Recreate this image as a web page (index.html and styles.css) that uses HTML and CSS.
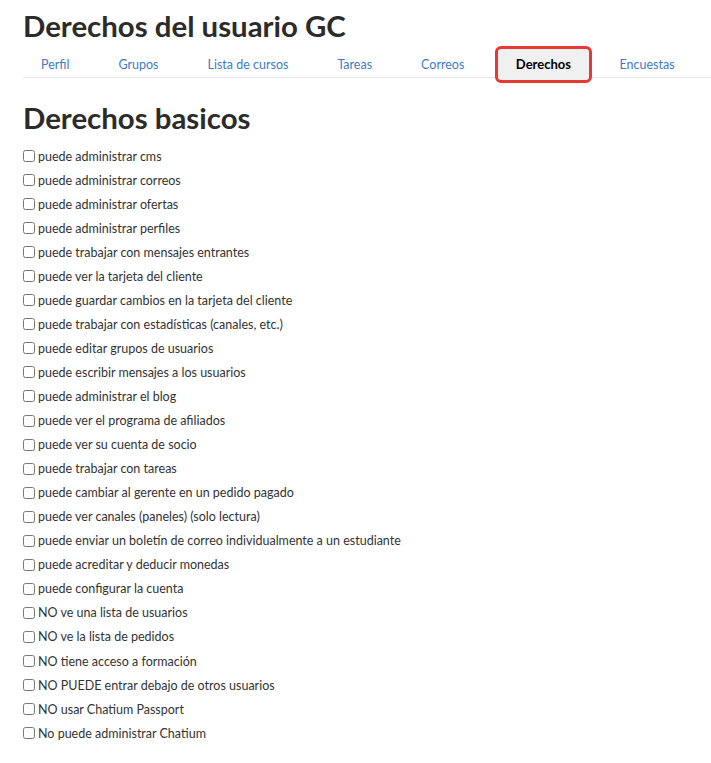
FILE: index.html
```html
<!DOCTYPE html>
<html lang="es">
<head>
    <meta charset="UTF-8">
    <meta name="viewport" content="width=device-width, initial-scale=1.0">
    <title>Derechos del usuario GC</title>
    <link rel="stylesheet" href="styles.css">
</head>
<body>
    <div class="page">
        <h1 class="page-title">Derechos del usuario GC</h1>

        <ul class="tabs">
            <li><a href="#">Perfil</a></li>
            <li><a href="#">Grupos</a></li>
            <li><a href="#">Lista de cursos</a></li>
            <li><a href="#">Tareas</a></li>
            <li><a href="#">Correos</a></li>
            <li class="active"><a href="#">Derechos</a></li>
            <li><a href="#">Encuestas</a></li>
        </ul>

        <h2 class="section-title">Derechos basicos</h2>

        <form class="rights">
            <label><input type="checkbox"> puede administrar cms</label>
            <label><input type="checkbox"> puede administrar correos</label>
            <label><input type="checkbox"> puede administrar ofertas</label>
            <label><input type="checkbox"> puede administrar perfiles</label>
            <label><input type="checkbox"> puede trabajar con mensajes entrantes</label>
            <label><input type="checkbox"> puede ver la tarjeta del cliente</label>
            <label><input type="checkbox"> puede guardar cambios en la tarjeta del cliente</label>
            <label><input type="checkbox"> puede trabajar con estadísticas (canales, etc.)</label>
            <label><input type="checkbox"> puede editar grupos de usuarios</label>
            <label><input type="checkbox"> puede escribir mensajes a los usuarios</label>
            <label><input type="checkbox"> puede administrar el blog</label>
            <label><input type="checkbox"> puede ver el programa de afiliados</label>
            <label><input type="checkbox"> puede ver su cuenta de socio</label>
            <label><input type="checkbox"> puede trabajar con tareas</label>
            <label><input type="checkbox"> puede cambiar al gerente en un pedido pagado</label>
            <label><input type="checkbox"> puede ver canales (paneles) (solo lectura)</label>
            <label><input type="checkbox"> puede enviar un boletín de correo individualmente a un estudiante</label>
            <label><input type="checkbox"> puede acreditar y deducir monedas</label>
            <label><input type="checkbox"> puede configurar la cuenta</label>
            <label><input type="checkbox"> NO ve una lista de usuarios</label>
            <label><input type="checkbox"> NO ve la lista de pedidos</label>
            <label><input type="checkbox"> NO tiene acceso a formación</label>
            <label><input type="checkbox"> NO PUEDE entrar debajo de otros usuarios</label>
            <label><input type="checkbox"> NO usar Chatium Passport</label>
            <label><input type="checkbox"> No puede administrar Chatium</label>
        </form>
    </div>
</body>
</html>
```

FILE: styles.css
```css
* {
    margin: 0;
    padding: 0;
    box-sizing: border-box;
}

body {
    font-family: Lato, "Open Sans", Arial, sans-serif;
    color: #333;
    background: #fff;
}

.page {
    padding: 8px 0 0 23px;
}

.page-title {
    font-size: 29.4px;
    font-weight: bold;
    line-height: 36px;
    color: #2b2b2b;
}

/* tabs */
.tabs {
    list-style: none;
    display: flex;
    align-items: flex-end;
    height: 34px;
    padding-bottom: 3px;
    border-bottom: 1px solid #e6e6e6;
}

.tabs li {
    display: flex;
}

.tabs a {
    display: block;
    padding: 0 24.5px;
    font-size: 12.5px;
    line-height: 18px;
    color: #3f7bc0;
    text-decoration: none;
}

.tabs li:first-child a {
    padding-left: 18px;
}

.tabs li.active a {
    margin: 0 3px 0 6px;
    padding: 6px 18px;
    height: 37px;
    background: #f0f0f0;
    border: 3px solid #e53a33;
    border-radius: 6px;
    color: #000;
    font-size: 13px;
    font-weight: bold;
    position: relative;
    top: 9px;
}

/* rights list */
.section-title {
    font-size: 29.4px;
    font-weight: bold;
    line-height: 36px;
    color: #2b2b2b;
    margin-top: 22px;
    margin-bottom: 8px;
}

.rights label {
    display: flex;
    align-items: center;
    height: 24.05px;
    font-size: 12.5px;
    color: #333;
}

.rights input {
    width: 12px;
    height: 12px;
    margin: 0 3px 0 0;
}
```
